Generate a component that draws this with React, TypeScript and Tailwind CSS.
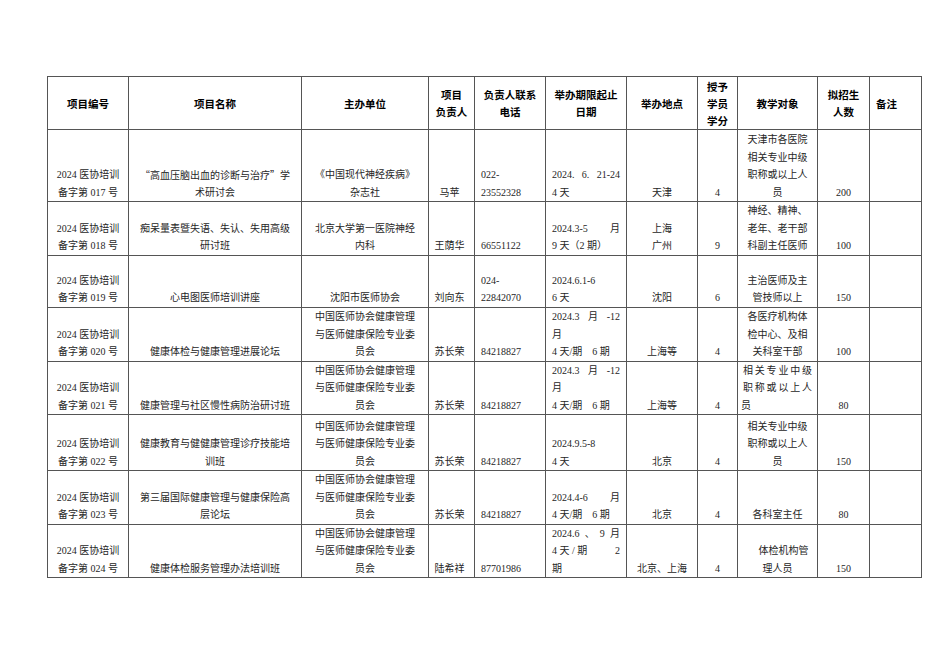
import React from 'react';

type Line = string | React.ReactElement | { j: string[] };

const Q = ({ c }: { c: string }) => <span className="font-['Noto_Sans_CJK_SC',sans-serif]">{c}</span>;

const HEADERS: string[][] = [
  ['项目编号'],
  ['项目名称'],
  ['主办单位'],
  ['项目', '负责人'],
  ['负责人联系', '电话'],
  ['举办期限起止', '日期'],
  ['举办地点'],
  ['授予', '学员', '学分'],
  ['教学对象'],
  ['拟招生', '人数'],
  ['备注'],
];

const COL_WIDTHS = ['w-[81px]', 'w-[173px]', 'w-[127px]', 'w-[46px]', 'w-[71px]', 'w-[81px]', 'w-[71px]', 'w-[40px]', 'w-[80px]', 'w-[52px]', 'w-[52px]'];

// body cell alignment per column
const CELL_CLS = [
  'text-center',
  'text-center',
  'text-center',
  'text-center pr-[4px]',
  'text-left pl-[6px]',
  'text-left px-[6px]',
  'text-center',
  'text-center',
  'text-center px-[5px]',
  'text-center',
  'text-left',
];

const ROW_HEIGHTS = ['h-[72px]', 'h-[53px]', 'h-[52px]', 'h-[54px]', 'h-[53px]', 'h-[56px]', 'h-[52px]', 'h-[52px]'];

const ASSOC: Line[] = ['中国医师协会健康管理', '与医师健康保险专业委', '员会'];

const ROWS: Line[][][] = [
  [
    ['2024 医协培训', '备字第 017 号'],
    [<span><Q c="“" />高血压脑出血的诊断与治疗<Q c="”" />学</span>, '术研讨会'],
    ['《中国现代神经疾病》', '杂志社'],
    ['马苹'],
    ['022-', '23552328'],
    [{ j: ['2024.', '6.', '21-24'] }, '4 天'],
    ['天津'],
    ['4'],
    ['天津市各医院', '相关专业中级', '职称或以上人', '员'],
    ['200'],
    [],
  ],
  [
    ['2024 医协培训', '备字第 018 号'],
    ['痴呆量表暨失语、失认、失用高级', '研讨班'],
    ['北京大学第一医院神经', '内科'],
    ['王荫华'],
    ['66551122'],
    [{ j: ['2024.3-5', '月'] }, '9 天（2 期）'],
    ['上海', '广州'],
    ['9'],
    ['神经、精神、', '老年、老干部', '科副主任医师'],
    ['100'],
    [],
  ],
  [
    ['2024 医协培训', '备字第 019 号'],
    ['心电图医师培训讲座'],
    ['沈阳市医师协会'],
    ['刘向东'],
    ['024-', '22842070'],
    ['2024.6.1-6', '6 天'],
    ['沈阳'],
    ['6'],
    ['主治医师及主', '管技师以上'],
    ['150'],
    [],
  ],
  [
    ['2024 医协培训', '备字第 020 号'],
    ['健康体检与健康管理进展论坛'],
    ASSOC,
    ['苏长荣'],
    ['84218827'],
    [{ j: ['2024.3', '月', '-12'] }, '月', '4 天/期　6 期'],
    ['上海等'],
    ['4'],
    ['各医疗机构体', '检中心、及相', '关科室干部'],
    ['100'],
    [],
  ],
  [
    ['2024 医协培训', '备字第 021 号'],
    ['健康管理与社区慢性病防治研讨班'],
    ASSOC,
    ['苏长荣'],
    ['84218827'],
    [{ j: ['2024.3', '月', '-12'] }, '月', '4 天/期　6 期'],
    ['上海等'],
    ['4'],
    [
      { j: ['相', '关', '专', '业', '中', '级'] },
      { j: ['职', '称', '或', '以', '上', '人'] },
      <div className="text-left -ml-[2px]">员</div>,
    ],
    ['80'],
    [],
  ],
  [
    ['2024 医协培训', '备字第 022 号'],
    ['健康教育与健健康管理诊疗技能培', '训班'],
    ASSOC,
    ['苏长荣'],
    ['84218827'],
    ['2024.9.5-8', '4 天'],
    ['北京'],
    ['4'],
    ['相关专业中级', '职称或以上人', '员'],
    ['150'],
    [],
  ],
  [
    ['2024 医协培训', '备字第 023 号'],
    ['第三届国际健康管理与健康保险高', '层论坛'],
    ASSOC,
    ['苏长荣'],
    ['84218827'],
    [{ j: ['2024.4-6', '月'] }, '4 天/期　6 期'],
    ['北京'],
    ['4'],
    ['各科室主任'],
    ['80'],
    [],
  ],
  [
    ['2024 医协培训', '备字第 024 号'],
    ['健康体检服务管理办法培训班'],
    ASSOC,
    ['陆希祥'],
    ['87701986'],
    [{ j: ['2024.6', '、', '9', '月'] }, { j: ['4 天 / 期', '2'] }, '期'],
    ['北京、上海'],
    ['4'],
    [<span className="pl-[12px]">体检机构管</span>, '理人员'],
    ['150'],
    [],
  ],
];

const renderLine = (line: Line, k: number) => {
  if (typeof line === 'object' && line !== null && 'j' in line) {
    return (
      <div key={k} className="flex justify-between h-[17.5px] leading-[17.5px] whitespace-pre">
        {line.j.map((t, i) => (
          <span key={i}>{t}</span>
        ))}
      </div>
    );
  }
  return (
    <div key={k} className="h-[17.5px] leading-[17.5px] whitespace-nowrap">
      {line}
    </div>
  );
};

export default function App() {
  return (
    <div className="w-[950px] h-[672px] bg-white pt-[76px] pl-[47px]">
      <table className="w-[874px] table-fixed border-collapse border border-[#555]">
        <colgroup>
          {COL_WIDTHS.map((w, i) => (
            <col key={i} className={w} />
          ))}
        </colgroup>
        <thead>
          <tr className="h-[53px]">
            {HEADERS.map((h, i) => (
              <th
                key={i}
                className={`p-0 align-middle border border-[#555] font-bold text-[10.5px] text-black font-['Noto_Sans_CJK_SC',sans-serif] ${
                  i === 10 ? 'text-left pl-[6px]' : 'text-center'
                }`}
              >
                {h.map((t, k) => (
                  <div key={k} className="leading-[17px] whitespace-nowrap">
                    {t}
                  </div>
                ))}
              </th>
            ))}
          </tr>
        </thead>
        <tbody>
          {ROWS.map((row, r) => (
            <tr key={r} className={ROW_HEIGHTS[r]}>
              {row.map((cell, c) => (
                <td
                  key={c}
                  className={`p-0 align-bottom border border-[#555] text-[10px] text-[#262626] font-['Liberation_Serif','Noto_Sans_CJK_SC',serif] ${CELL_CLS[c]}`}
                >
                  {cell.map((line, k) => renderLine(line, k))}
                </td>
              ))}
            </tr>
          ))}
        </tbody>
      </table>
    </div>
  );
}
